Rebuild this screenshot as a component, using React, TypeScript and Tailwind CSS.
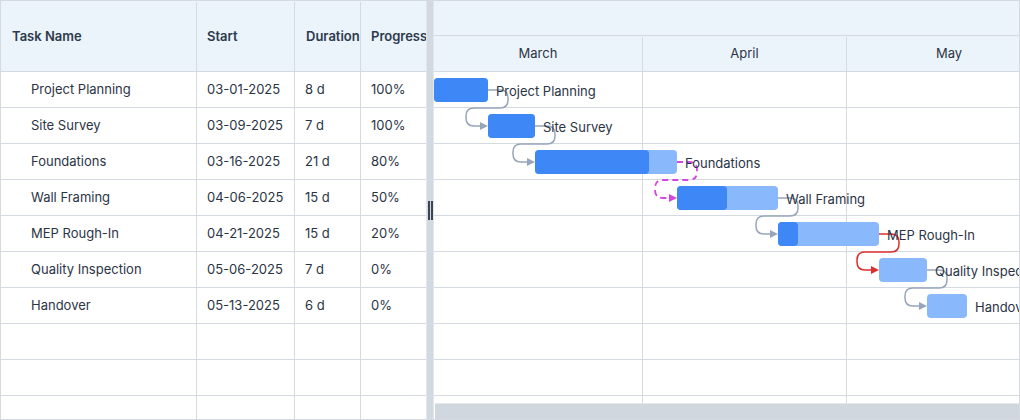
const tasks = [
  { name: "Project Planning", start: "03-01-2025", dur: "8 d", prog: "100%", x: 0, w: 54, p: 54 },
  { name: "Site Survey", start: "03-09-2025", dur: "7 d", prog: "100%", x: 54, w: 47, p: 47 },
  { name: "Foundations", start: "03-16-2025", dur: "21 d", prog: "80%", x: 101, w: 142, p: 114 },
  { name: "Wall Framing", start: "04-06-2025", dur: "15 d", prog: "50%", x: 243, w: 101, p: 50 },
  { name: "MEP Rough-In", start: "04-21-2025", dur: "15 d", prog: "20%", x: 344, w: 101, p: 20 },
  { name: "Quality Inspection", start: "05-06-2025", dur: "7 d", prog: "0%", x: 445, w: 48, p: 0 },
  { name: "Handover", start: "05-13-2025", dur: "6 d", prog: "0%", x: 493, w: 40, p: 0 },
]

const links = [
  { color: "#97a6ba", dash: false },
  { color: "#97a6ba", dash: false },
  { color: "#d545e0", dash: true },
  { color: "#97a6ba", dash: false },
  { color: "#dc2f2f", dash: false },
  { color: "#97a6ba", dash: false },
]

const emptyRows = [0, 1, 2]

function connector(x1: number, y1: number, x2: number) {
  const y2 = y1 + 36
  const mid = y1 + 18
  const r = x1 + 20
  const l = x2 - 22
  return `M ${x1} ${y1} H ${r - 8} Q ${r} ${y1} ${r} ${y1 + 8} V ${mid - 8} Q ${r} ${mid} ${r - 8} ${mid} H ${l + 8} Q ${l} ${mid} ${l} ${mid + 8} V ${y2 - 8} Q ${l} ${y2} ${l + 8} ${y2} H ${x2 - 5}`
}

function GanttChart() {
  return (
    <svg className="absolute left-0 top-0" width={585} height={330}>
      {/* Linien zwischen den Vorgängen */}
      {links.map((lk, i) => {
        const a = tasks[i]
        const b = tasks[i + 1]
        const x1 = a.x + a.w
        const y1 = 18 + 36 * i
        const x2 = b.x
        const y2 = y1 + 36
        return (
          <g key={i}>
            <path
              d={connector(x1, y1, x2)}
              fill="none"
              stroke={lk.color}
              strokeWidth={lk.dash ? 1.8 : 1.5}
              strokeDasharray={lk.dash ? "6 4" : undefined}
            />
            <polygon points={`${x2 - 8},${y2 - 4} ${x2},${y2} ${x2 - 8},${y2 + 4}`} fill={lk.color} />
          </g>
        )
      })}

      {/* Balken */}
      {tasks.map((t, i) => (
        <g key={t.name}>
          <rect x={t.x} y={6 + 36 * i} width={t.w} height={24} rx={4} fill="#89b8fc" />
          {t.p > 0 && <rect x={t.x} y={6 + 36 * i} width={t.p} height={24} rx={4} fill="#3d87f6" />}
          <text
            x={t.x + t.w + 8}
            y={18.5 + 36 * i}
            dominantBaseline="central"
            fontSize={13}
            fill="#2b3445"
            style={{ fontFamily: "Inter, 'Liberation Sans', sans-serif" }}
          >
            {t.name}
          </text>
        </g>
      ))}
    </svg>
  )
}

export default function App() {
  return (
    <div className="w-[1020px] h-[420px] overflow-hidden bg-white border border-[#d5d9e0] flex font-['Inter','Liberation_Sans',sans-serif] text-[13px] text-[#2b3445]">
      {/* Tabelle links */}
      <div className="w-[425px] shrink-0 flex flex-col">
        <div className="h-[71px] shrink-0 flex pt-px bg-[#ebf3fb] border-b border-[#d5d9e0] font-semibold text-[#2d3a4d]">
          <div className="w-[196px] pl-[11px] flex items-center border-r border-[#d5d9e0]">Task Name</div>
          <div className="w-[98px] pl-[10px] flex items-center border-r border-[#d5d9e0]">Start</div>
          <div className="w-[66px] pl-[11px] flex items-center border-r border-[#d5d9e0]">Duration</div>
          <div className="flex-1 pl-[10px] flex items-center whitespace-nowrap overflow-hidden">Progress</div>
        </div>
        {tasks.map((t) => (
          <div key={t.name} className="h-9 shrink-0 flex border-b border-[#d5d9e0]">
            <div className="w-[196px] pl-[30px] pt-px flex items-center border-r border-[#d5d9e0]">{t.name}</div>
            <div className="w-[98px] pl-[10px] pt-px flex items-center border-r border-[#d5d9e0]">{t.start}</div>
            <div className="w-[66px] pl-[10px] pt-px flex items-center border-r border-[#d5d9e0]">{t.dur}</div>
            <div className="flex-1 pl-[10px] pt-px flex items-center">{t.prog}</div>
          </div>
        ))}
        {emptyRows.map((r) => (
          <div key={r} className="h-9 shrink-0 flex border-b border-[#d5d9e0]">
            <div className="w-[196px] border-r border-[#d5d9e0]" />
            <div className="w-[98px] border-r border-[#d5d9e0]" />
            <div className="w-[66px] border-r border-[#d5d9e0]" />
            <div className="flex-1" />
          </div>
        ))}
      </div>

      {/* Splitter */}
      <div className="w-[8px] shrink-0 bg-[#d3d9e1] border-x border-[#e3e7ec] flex items-center justify-center gap-[1px]">
        <div className="w-[2px] h-[19px] bg-[#3b4656]" />
        <div className="w-[2px] h-[19px] bg-[#3b4656]" />
      </div>

      {/* Zeitachse rechts */}
      <div className="flex-1 flex flex-col relative overflow-hidden">
        <div className="h-[35px] shrink-0 bg-[#ebf3fb] border-b border-[#d5d9e0]" />
        <div className="h-[36px] shrink-0 flex pt-px bg-[#ebf3fb] border-b border-[#d5d9e0]">
          <div className="w-[209px] shrink-0 flex items-center justify-center border-r border-[#d5d9e0]">March</div>
          <div className="w-[204px] shrink-0 flex items-center justify-center border-r border-[#d5d9e0]">April</div>
          <div className="w-[204px] shrink-0 flex items-center justify-center">May</div>
        </div>
        <div className="flex-1 relative">
          {[...tasks, ...emptyRows].map((_, i) => (
            <div key={i} className="h-9 flex border-b border-[#d5d9e0]">
              <div className="w-[209px] shrink-0 border-r border-[#d5d9e0]" />
              <div className="w-[204px] shrink-0 border-r border-[#d5d9e0]" />
              <div className="w-[204px] shrink-0" />
            </div>
          ))}
          <GanttChart />
        </div>
        <div className="absolute bottom-0 left-[1px] right-0 h-[16px] bg-[#d0d7df] border-t border-[#e4e8ed]" />
      </div>
    </div>
  )
}
